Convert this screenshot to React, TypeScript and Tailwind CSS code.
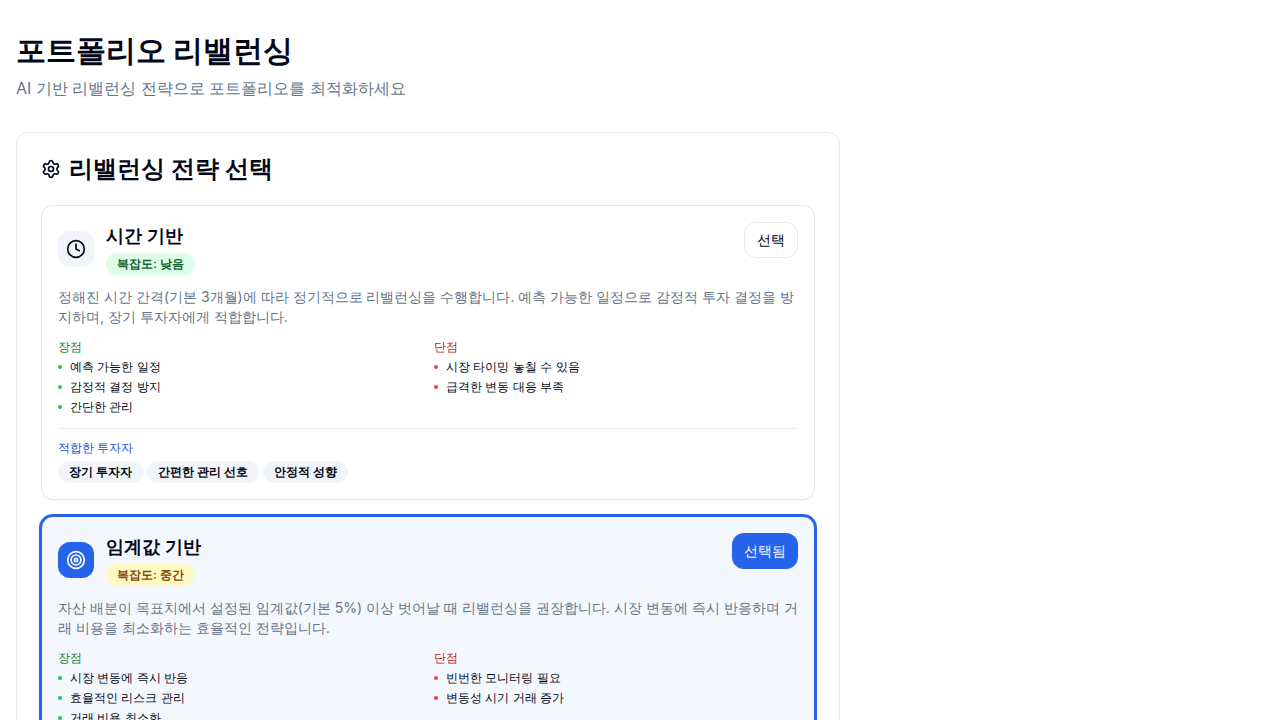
import { Settings, Clock, Target, type LucideIcon } from "lucide-react";

type Strategy = {
  name: string;
  icon: LucideIcon;
  level: string;
  levelClass: string;
  description: string;
  pros: string[];
  cons: string[];
  suitable: string[];
  selected: boolean;
};

const strategies: Strategy[] = [
  {
    name: "시간 기반",
    icon: Clock,
    level: "낮음",
    levelClass: "bg-[#dcfce7] text-[#166534]",
    description:
      "정해진 시간 간격(기본 3개월)에 따라 정기적으로 리밸런싱을 수행합니다. 예측 가능한 일정으로 감정적 투자 결정을 방지하며, 장기 투자자에게 적합합니다.",
    pros: ["예측 가능한 일정", "감정적 결정 방지", "간단한 관리"],
    cons: ["시장 타이밍 놓칠 수 있음", "급격한 변동 대응 부족"],
    suitable: ["장기 투자자", "간편한 관리 선호", "안정적 성향"],
    selected: false,
  },
  {
    name: "임계값 기반",
    icon: Target,
    level: "중간",
    levelClass: "bg-[#fef9c3] text-[#854d0e]",
    description:
      "자산 배분이 목표치에서 설정된 임계값(기본 5%) 이상 벗어날 때 리밸런싱을 권장합니다. 시장 변동에 즉시 반응하며 거래 비용을 최소화하는 효율적인 전략입니다.",
    pros: ["시장 변동에 즉시 반응", "효율적인 리스크 관리", "거래 비용 최소화"],
    cons: ["빈번한 모니터링 필요", "변동성 시기 거래 증가"],
    suitable: ["적극적 투자자", "효율성 중시"],
    selected: true,
  },
];

function PointList({ title, items, titleClass, dotClass }: { title: string; items: string[]; titleClass: string; dotClass: string }) {
  return (
    <div>
      <h5 className={`mb-1 text-xs font-medium ${titleClass}`}>{title}</h5>
      <ul className="space-y-1">
        {items.map((item) => (
          <li key={item} className="flex items-center gap-2 text-xs">
            <span className={`size-1 rounded-full ${dotClass}`} />
            {item}
          </li>
        ))}
      </ul>
    </div>
  );
}

function StrategyCard({ strategy }: { strategy: Strategy }) {
  const Icon = strategy.icon;
  const { selected } = strategy;
  return (
    <article
      className={`rounded-xl border p-4 ${
        selected ? "border-[#2563eb] bg-[#f4f7fe] ring-2 ring-[#2563eb]" : "border-[#e2e8f0] bg-white shadow-[0_1px_2px_0_rgb(0_0_0/0.05)]"
      }`}
    >
      <div className="flex items-start justify-between">
        <div className="flex items-center gap-3">
          <div className={`rounded-xl p-2 ${selected ? "bg-[#2563eb] text-[#f8fafc]" : "bg-[#f1f5f9]"}`}>
            <Icon className="size-5" />
          </div>
          <div>
            <h4 className="text-lg font-semibold">{strategy.name}</h4>
            <span className={`inline-flex items-center rounded-full border border-transparent px-2.5 py-0.5 text-xs font-semibold ${strategy.levelClass}`}>
              복잡도: {strategy.level}
            </span>
          </div>
        </div>
        <button
          type="button"
          aria-pressed={selected}
          className={`h-9 rounded-xl px-3 text-sm font-medium ${
            selected ? "bg-[#2563eb] text-[#f8fafc]" : "border border-[#e2e8f0] bg-white"
          }`}
        >
          {selected ? "선택됨" : "선택"}
        </button>
      </div>
      <p className="mt-3 mb-3 text-sm text-[#64748b]">{strategy.description}</p>
      <div className="grid grid-cols-2 gap-3">
        <PointList title="장점" items={strategy.pros} titleClass="text-[#15803d]" dotClass="bg-[#22c55e]" />
        <PointList title="단점" items={strategy.cons} titleClass="text-[#b91c1c]" dotClass="bg-[#ef4444]" />
      </div>
      <div className="mt-[13px] border-t border-[#e2e8f0] pt-[11px]">
        <h5 className="mb-[5px] text-xs font-medium text-[#1d4ed8]">적합한 투자자</h5>
        <div className="flex flex-wrap gap-1">
          {strategy.suitable.map((label) => (
            <span key={label} className="inline-flex items-center rounded-full border border-transparent bg-[#f1f5f9] px-2.5 py-0.5 text-xs font-semibold">
              {label}
            </span>
          ))}
        </div>
      </div>
    </article>
  );
}

export default function App() {
  return (
    <main className="min-h-screen bg-white px-4 py-8 font-['Inter',sans-serif] text-[#020817]">
      <header className="mb-8">
        <h1 className="mb-2 text-3xl font-bold">포트폴리오 리밸런싱</h1>
        <p className="text-[#64748b]">AI 기반 리밸런싱 전략으로 포트폴리오를 최적화하세요</p>
      </header>
      <div className="grid grid-cols-3 gap-6">
        <section className="col-span-2 rounded-xl border border-[#e2e8f0] p-6">
          <h2 className="mb-6 flex items-center gap-2 text-2xl leading-none font-semibold">
            <Settings className="size-5" />
            리밸런싱 전략 선택
          </h2>
          <div className="space-y-4">
            {strategies.map((s) => (
              <StrategyCard key={s.name} strategy={s} />
            ))}
          </div>
        </section>
      </div>
    </main>
  );
}
